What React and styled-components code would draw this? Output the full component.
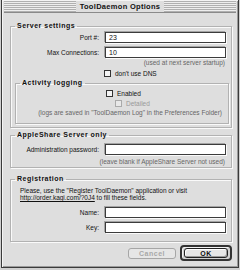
import styled, { createGlobalStyle } from "styled-components"

const Global = createGlobalStyle`
  body {
    margin: 0;
    background: #cfcfcf;
    font-family: "Liberation Sans", Arial, sans-serif;
    font-size: 6.5px;
    color: #111;
  }
`

function Check({ label, disabled, indent }) {
  return (
    <CheckRow indent={indent} disabled={disabled}>
      <Box disabled={disabled} />
      <span>{label}</span>
    </CheckRow>
  )
}

function LabeledField({ label, top, value }) {
  return (
    <Row top={top}>
      <Label>{label}</Label>
      <Input>{value}</Input>
    </Row>
  )
}

export default function App() {
  return (
    <>
      <Global />
      <Window>
        <TitleBar>
          <Title>ToolDaemon Options</Title>
        </TitleBar>
        <Content>
          <Group top={9} bottom={3}>
            <Legend>Server settings</Legend>
            <LabeledField label="Port #:" top={2} value="23" />
            <LabeledField label="Max Connections:" top={4} value="10" />
            <Note top={1}>(used at next server startup)</Note>
            <Check label="don't use DNS" indent={93} />
            <SubGroup>
              <Legend>Activity logging</Legend>
              <Check label="Enabled" indent={90} />
              <Check label="Detailed" indent={99} disabled />
              <Note top={2}>(logs are saved in "ToolDaemon Log" in the Preferences Folder)</Note>
            </SubGroup>
          </Group>
          <Group top={3} bottom={1}>
            <Legend>AppleShare Server only</Legend>
            <LabeledField label="Administration password:" top={5} />
            <Note top={3}>(leave blank if AppleShare Server not used)</Note>
          </Group>
          <Group top={7} bottom={8}>
            <Legend>Registration</Legend>
            <Para>
              Please, use the "Register ToolDaemon" application or visit
              <br />
              <Link>http://order.kagi.com/?0J4</Link> to fill these fields.
            </Para>
            <LabeledField label="Name:" top={6} />
            <LabeledField label="Key:" top={4} />
          </Group>
          <Buttons>
            <Button disabled>Cancel</Button>
            <DefaultRing>
              <Button>OK</Button>
            </DefaultRing>
          </Buttons>
        </Content>
      </Window>
    </>
  )
}

const Window = styled.div`
  width: 238px;
  height: 268px;
  margin: 0 0 0 1px;
  box-sizing: border-box;
  background: #dedede;
  border: 1px solid #3a3a3a;
  border-top: none;
  box-shadow: inset 1px 1px 0 #f4f4f4, inset -1px -1px 0 #9a9a9a;
  display: flex;
  flex-direction: column;
`

const TitleBar = styled.div`
  height: 11px;
  margin: 1px 2px 0;
  display: flex;
  justify-content: center;
  align-items: center;
  background: repeating-linear-gradient(#b0b0b0 0 1px, #eeeeee 1px 2px);
  border-bottom: 1px solid #8a8a8a;
`

const Title = styled.div`
  background: #dedede;
  padding: 0 4px;
  height: 11px;
  line-height: 11px;
  font-weight: bold;
  font-size: 7.5px;
  letter-spacing: 0.3px;
`

const Content = styled.div`
  padding: 0 6px 0 8px;
  display: flex;
  flex-direction: column;
`

const Group = styled.fieldset`
  margin: ${p => p.top}px 0 0;
  padding: 0 0 ${p => p.bottom}px;
  min-width: 0;
  border: 1px solid #b2b2b2;
  box-shadow: inset 1px 1px 0 #fafafa, 1px 1px 0 #fafafa;
  display: flex;
  flex-direction: column;
`

const SubGroup = styled(Group)`
  margin: 2px 2px 0 4px;
  padding: 0 0 6px;
`

const Legend = styled.legend`
  margin-left: 4px;
  padding: 0 2px;
  height: 8px;
  line-height: 8px;
  font-weight: bold;
  font-size: 7px;
  letter-spacing: 0.5px;
`

const Row = styled.div`
  display: flex;
  align-items: center;
  margin: ${p => p.top}px 5px 0 0;
`

const Label = styled.div`
  flex: 1;
  text-align: right;
  padding-right: 6px;
`

const Input = styled.div`
  width: 121px;
  height: 11px;
  box-sizing: border-box;
  padding-left: 3px;
  line-height: 9px;
  font-size: 7px;
  background: #fff;
  border: 1px solid #3c3c3c;
  box-shadow: 1px 1px 0 #fbfbfb, -1px -1px 0 #a4a4a4;
`

const Note = styled.div`
  margin: ${p => p.top}px 6px 0 0;
  height: 8px;
  line-height: 8px;
  text-align: right;
  color: #666;
`

const CheckRow = styled.div`
  display: flex;
  align-items: center;
  gap: 4px;
  height: 8px;
  margin: 2px 0 0 ${p => p.indent}px;
  color: ${p => (p.disabled ? "#999" : "#111")};
`

const Box = styled.div`
  width: 7px;
  height: 7px;
  box-sizing: border-box;
  background: ${p => (p.disabled ? "#e8e8e8" : "#f4f4f4")};
  border: 1px solid ${p => (p.disabled ? "#aaa" : "#333")};
`

const Para = styled.div`
  padding: 4px 0 0 9px;
  line-height: 7px;
`

const Link = styled.span`
  text-decoration: underline;
`

const Buttons = styled.div`
  display: flex;
  justify-content: flex-end;
  align-items: center;
  gap: 4px;
  margin-top: 3px;
`

const Button = styled.div`
  width: ${p => (p.disabled ? "48px" : "44px")};
  height: ${p => (p.disabled ? "11px" : "10px")};
  box-sizing: border-box;
  display: flex;
  align-items: center;
  justify-content: center;
  border: 1px solid ${p => (p.disabled ? "#a6a6a6" : "#222")};
  border-radius: 3px;
  background: #e6e6e6;
  box-shadow: ${p => (p.disabled ? "none" : "inset 1px 1px 0 #fff, inset -1px -1px 0 #999")};
  color: ${p => (p.disabled ? "#a8a8a8" : "#111")};
  font-weight: bold;
  font-size: 7px;
  letter-spacing: 0.5px;
`

const DefaultRing = styled.div`
  width: 52px;
  height: 16px;
  box-sizing: border-box;
  display: flex;
  align-items: center;
  justify-content: center;
  border: 2px solid #333;
  border-radius: 4px;
  background: #d0d0d0;
  box-shadow: inset 1px 1px 0 #f2f2f2;
`
